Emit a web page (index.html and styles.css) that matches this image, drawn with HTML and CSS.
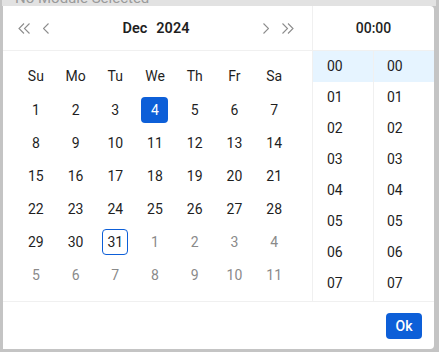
FILE: index.html
```html
<!DOCTYPE html>
<html lang="en">

<head>
    <meta charset="UTF-8">
    <meta name="viewport" content="width=device-width, initial-scale=1.0">
    <title>Date picker</title>
    <link rel="stylesheet" href="styles.css">
</head>

<body>
    <div class="field"><span>No Module Selected</span></div>
    <div class="picker">
        <div class="panels">
            <!-- 日期面板 -->
            <div class="date-panel">
                <div class="head">
                    <div class="nav">
                        <svg class="arrow2" width="12" height="11" viewBox="0 0 12 11"><polyline points="6,0.5 1,5.5 6,10.5" /><polyline points="11.5,0.5 6.5,5.5 11.5,10.5" /></svg>
                        <svg class="arrow" width="6" height="11" viewBox="0 0 6 11"><polyline points="5.5,0.5 0.5,5.5 5.5,10.5" /></svg>
                    </div>
                    <div class="title"><span>Dec</span><span>2024</span></div>
                    <div class="nav">
                        <svg class="arrow" width="6" height="11" viewBox="0 0 6 11"><polyline points="0.5,0.5 5.5,5.5 0.5,10.5" /></svg>
                        <svg class="arrow2" width="12" height="11" viewBox="0 0 12 11"><polyline points="0.5,0.5 5.5,5.5 0.5,10.5" /><polyline points="6,0.5 11,5.5 6,10.5" /></svg>
                    </div>
                </div>
                <div class="days">
                    <div class="week">Su</div>
                    <div class="week">Mo</div>
                    <div class="week">Tu</div>
                    <div class="week">We</div>
                    <div class="week">Th</div>
                    <div class="week">Fr</div>
                    <div class="week">Sa</div>

                    <div class="day"><span>1</span></div>
                    <div class="day"><span>2</span></div>
                    <div class="day"><span>3</span></div>
                    <div class="day selected"><span>4</span></div>
                    <div class="day"><span>5</span></div>
                    <div class="day"><span>6</span></div>
                    <div class="day"><span>7</span></div>

                    <div class="day"><span>8</span></div>
                    <div class="day"><span>9</span></div>
                    <div class="day"><span>10</span></div>
                    <div class="day"><span>11</span></div>
                    <div class="day"><span>12</span></div>
                    <div class="day"><span>13</span></div>
                    <div class="day"><span>14</span></div>

                    <div class="day"><span>15</span></div>
                    <div class="day"><span>16</span></div>
                    <div class="day"><span>17</span></div>
                    <div class="day"><span>18</span></div>
                    <div class="day"><span>19</span></div>
                    <div class="day"><span>20</span></div>
                    <div class="day"><span>21</span></div>

                    <div class="day"><span>22</span></div>
                    <div class="day"><span>23</span></div>
                    <div class="day"><span>24</span></div>
                    <div class="day"><span>25</span></div>
                    <div class="day"><span>26</span></div>
                    <div class="day"><span>27</span></div>
                    <div class="day"><span>28</span></div>

                    <div class="day"><span>29</span></div>
                    <div class="day"><span>30</span></div>
                    <div class="day today"><span>31</span></div>
                    <div class="day other"><span>1</span></div>
                    <div class="day other"><span>2</span></div>
                    <div class="day other"><span>3</span></div>
                    <div class="day other"><span>4</span></div>

                    <div class="day other"><span>5</span></div>
                    <div class="day other"><span>6</span></div>
                    <div class="day other"><span>7</span></div>
                    <div class="day other"><span>8</span></div>
                    <div class="day other"><span>9</span></div>
                    <div class="day other"><span>10</span></div>
                    <div class="day other"><span>11</span></div>
                </div>
            </div>
            <!-- 时间面板 -->
            <div class="time-panel">
                <div class="head">00:00</div>
                <div class="cols">
                    <ul class="col">
                        <li class="active">00</li>
                        <li>01</li>
                        <li>02</li>
                        <li>03</li>
                        <li>04</li>
                        <li>05</li>
                        <li>06</li>
                        <li>07</li>
                    </ul>
                    <ul class="col">
                        <li class="active">00</li>
                        <li>01</li>
                        <li>02</li>
                        <li>03</li>
                        <li>04</li>
                        <li>05</li>
                        <li>06</li>
                        <li>07</li>
                    </ul>
                </div>
            </div>
        </div>
        <div class="footer">
            <button class="ok">Ok</button>
        </div>
    </div>
</body>

</html>
```

FILE: styles.css
```css
* {
    margin: 0;
    padding: 0;
    box-sizing: border-box;
}

li {
    list-style: none;
}

body {
    width: 439px;
    height: 352px;
    overflow: hidden;
    background-color: #c4c4c4;
    font-family: Roboto, "Liberation Sans", sans-serif;
    font-size: 14px;
    color: #1f1f1f;
}

.field {
    margin-left: 2px;
    width: 434px;
    height: 6px;
    overflow: hidden;
    background-color: #e2e2e2;
}

.field span {
    display: block;
    margin: -11px 0 0 13px;
    font-size: 15px;
    line-height: 18px;
    color: #9a9a9a;
}

.picker {
    display: flex;
    flex-direction: column;
    margin-left: 3px;
    width: 431px;
    height: 343px;
    background-color: #fff;
    border-radius: 0 4px 4px 0;
}

.panels {
    display: flex;
    height: 296px;
    border-bottom: 1px solid #f0f0f0;
}

.head {
    height: 45px;
    border-bottom: 1px solid #f0f0f0;
}

/* 日期 */
.date-panel {
    width: 309px;
}

.date-panel .head {
    display: flex;
    align-items: center;
    padding: 0 18px 0 15px;
}

.nav {
    display: flex;
    align-items: center;
    gap: 13px;
    width: 31px;
}

.nav:last-child {
    justify-content: flex-end;
}

.nav svg {
    fill: none;
    stroke: #8c8c8c;
    stroke-width: 1.1;
}

.title {
    flex: 1;
    display: flex;
    justify-content: center;
    gap: 9px;
    font-weight: 600;
    font-size: 14.5px;
}

.days {
    display: grid;
    grid-template-columns: repeat(7, 1fr);
    grid-auto-rows: 26px;
    row-gap: 7px;
    padding: 13px 18px 0 13px;
}

.week {
    display: flex;
    align-items: center;
    justify-content: center;
    margin-bottom: 2px;
}

.day {
    display: flex;
    align-items: center;
    justify-content: center;
}

.day span {
    display: flex;
    align-items: center;
    justify-content: center;
    min-width: 26px;
    height: 26px;
    border-radius: 4px;
}

.other {
    color: #8a8a8a;
}

.selected span {
    width: 27px;
    background-color: #0d5fd8;
    color: #fff;
}

.today span {
    border: 1px solid #0d5fd8;
}

/* 时间 */
.time-panel {
    flex: 1;
    border-left: 1px solid #f0f0f0;
}

.time-panel .head {
    display: flex;
    align-items: center;
    justify-content: center;
    font-weight: 500;
}

.cols {
    display: flex;
    height: 250px;
    overflow: hidden;
}

.col {
    width: 60px;
}

.col + .col {
    flex: 1;
    border-left: 1px solid #f0f0f0;
}

.col li {
    height: 31px;
    line-height: 30px;
    padding-left: 14px;
}

.col + .col li {
    padding-left: 13px;
}

.col .active {
    background-color: #e6f4ff;
}

.footer {
    display: flex;
    justify-content: flex-end;
    align-items: flex-start;
    flex: 1;
    padding: 11px 12px 0 0;
}

.ok {
    width: 36px;
    height: 26px;
    border: 0;
    border-radius: 4px;
    background-color: #0d5fd8;
    color: #fff;
    font-family: Roboto, "Liberation Sans", sans-serif;
    font-size: 14px;
    font-weight: 500;
}
```
